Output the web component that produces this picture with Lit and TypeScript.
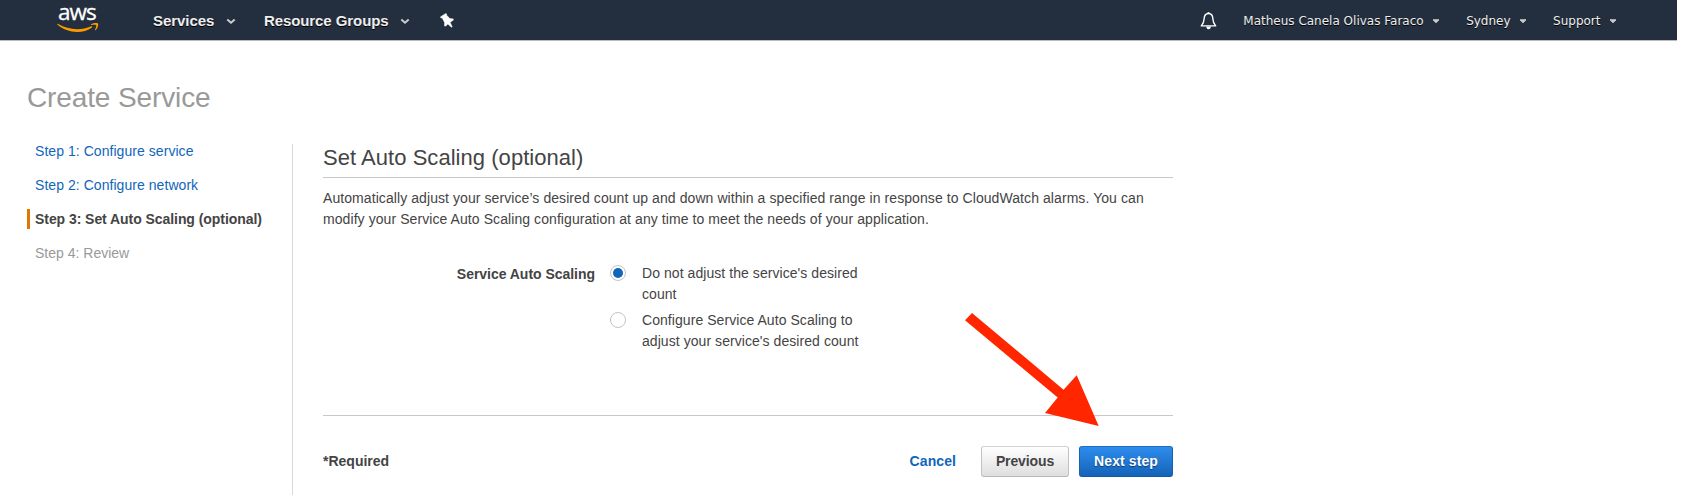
import { LitElement, html, css, svg } from "lit";
import { customElement, property, state } from "lit/decorators.js";
import { classMap } from "lit/directives/class-map.js";

@customElement("console-header")
class ConsoleHeader extends LitElement {
  static styles = css`
    :host {
      display: block;
      width: 1677px;
      height: 40px;
      background: #232f3e;
      border-bottom: 1px solid #bcbcbc;
      color: #eee;
    }
    .bar { display: flex; align-items: flex-start; height: 40px; }
    .logo {
      display: flex;
      flex-direction: column;
      width: 42px;
      margin-left: 57px;
    }
    .word {
      height: 23px;
      padding-left: 1px;
      font: 22.5px/24px "Open Sans", sans-serif;
      letter-spacing: -1px;
      color: #fff;
      -webkit-text-stroke: 0.3px #fff;
    }
    .smile { display: block; width: 42px; height: 10px; }
    .menu {
      display: flex;
      font: bold 15px/20px "Liberation Sans", Arial, sans-serif;
      letter-spacing: -0.04px;
      text-shadow: 0 1px 0 #000;
      padding-top: 11px;
    }
    .services { margin-left: 54px; }
    .groups { margin-left: 28px; letter-spacing: -0.08px; }
    .chev { display: block; width: 10px; height: 7px; margin: 7px 0 0 11.5px; }
    .pin { display: block; width: 14px; height: 15px; margin: 13px 0 0 30px; }
    .account {
      display: flex;
      margin-left: auto;
      padding: 11px 60px 0 0;
      font: 12px/20px "DejaVu Sans", Verdana, sans-serif;
      text-shadow: 0 1px 0 #000;
    }
    .item { display: flex; }
    .item + .item { margin-left: 26px; }
    .caret { display: block; width: 8px; height: 5px; margin: 8px 0 0 8.5px; }
    .bell { display: block; width: 17px; height: 18px; margin: 1px 26px 0 0; }
  `;

  private chevron() {
    return svg`<svg class="chev" viewBox="0 0 10 7"><path d="M1.300 1.500 5 4.700 8.700 1.500" fill="none" stroke="#ccc" stroke-width="2"/></svg>`;
  }

  private caret() {
    return svg`<svg class="caret" viewBox="0 0 8 5"><path d="M1 .8H7L4 3.7Z" fill="#ccc" stroke="#ccc" stroke-width="1" stroke-linejoin="round"/></svg>`;
  }

  render() {
    return html`
      <div class="bar">
        <div class="logo">
          <span class="word">aws</span>
          <svg class="smile" viewBox="0 0 42 10">
            <path d="M.3 1.5C.1.9.6.6 1.2 1 7 4.400 13.500 6.200 20 6.200c5 0 9.800-1 14.200-2.900.8-.3 1.400.5.7 1.100C31 7.400 25.300 9 20.300 9 12.800 9 5.800 6.200.3 1.500Z" fill="#f90"/>
            <path d="M34.200 1.200C36.200-.1 40.200-.3 41 .5c.7.900-.3 4.900-2.400 6.700-.4.300-.8.100-.6-.4.6-1.500 1.600-4 1.100-4.700-.5-.6-3.100-.3-4.500-.1-.8.1-.9-.5-.4-.8Z" fill="#f90"/>
          </svg>
        </div>
        <div class="menu services">Services ${this.chevron()}</div>
        <div class="menu groups">Resource Groups ${this.chevron()}</div>
        <svg class="pin" viewBox="0 0 14 15">
          <path d="M5.800.4 6.800 1.200 6.600 2.200 9.900 5.600 13.300 5.900 13.200 7.300 10.100 9.300 12.200 13.800 11.500 14.200 7.800 11 5.800 13.100 4.600 13 4.500 9.300 2.200 5 1 5 .4 3.900Z" fill="#fff" stroke="#fff" stroke-width=".5"/>
        </svg>
        <div class="account">
          <svg class="bell" viewBox="0 0 17 18">
            <path d="M8.500 1.500C5.200 1.500 4.200 4 4.100 7 4 10.500 3.200 11.800 1.300 13.900H15.700C13.800 11.800 13 10.500 12.900 7 12.800 4 11.800 1.500 8.500 1.500Z" fill="none" stroke="#fff" stroke-width="1.400" stroke-linejoin="round"/>
            <path d="M7.500.2h2v1.500h-2ZM6 14.500h5.200Q10.400 17.200 8.600 17.200 6.800 17.200 6 14.500Z" fill="#fff"/>
          </svg>
          <div class="item">Matheus Canela Olivas Faraco ${this.caret()}</div>
          <div class="item">Sydney ${this.caret()}</div>
          <div class="item">Support ${this.caret()}</div>
        </div>
      </div>
    `;
  }
}

@customElement("wizard-steps")
class WizardSteps extends LitElement {
  @property({ type: Number }) current = 3;

  static styles = css`
    :host { display: block; }
    .steps { display: flex; flex-direction: column; gap: 14px; margin: 0; padding: 0; list-style: none; }
    .step {
      border-left: 3px solid transparent;
      padding-left: 5px;
      height: 20px;
      line-height: 20px;
      white-space: nowrap;
      letter-spacing: 0.05px;
      color: #1166bb;
    }
    .active { border-color: #e07700; color: #444; font-weight: bold; letter-spacing: -0.06px; }
    .pending { color: #999; letter-spacing: 0; }
  `;

  private names = ["Configure service", "Configure network", "Set Auto Scaling (optional)", "Review"];

  render() {
    return html`<ol class="steps">
      ${this.names.map((name, i) => html`<li class=${classMap({
        step: true,
        active: i + 1 === this.current,
        pending: i + 1 > this.current,
      })}>Step ${i + 1}: ${name}</li>`)}
    </ol>`;
  }
}

@customElement("app-root")
class AppRoot extends LitElement {
  @state() private choice = 0;

  static styles = css`
    :host {
      display: block;
      position: relative;
      height: 495px;
      overflow: hidden;
      background: #fff;
      color: #444;
      font: 14px/21px "Liberation Sans", Arial, sans-serif;
    }
    .title {
      margin: 40px 0 0 27px;
      font-size: 28px;
      font-weight: normal;
      line-height: 34px;
      letter-spacing: -0.12px;
      color: #999;
    }
    .columns { display: flex; margin-top: 29px; }
    .nav { box-sizing: border-box; width: 292px; padding-left: 27px; margin-top: -3px; }
    .content { width: 850px; height: 351px; padding-left: 30px; border-left: 1px solid #d8d8d8; }
    .heading {
      height: 33px;
      margin: 0;
      border-bottom: 1px solid #c8c8c8;
      font-size: 22px;
      font-weight: normal;
      line-height: 28px;
      letter-spacing: 0.04px;
    }
    .intro { margin: 10px 0 0; letter-spacing: 0.077px; white-space: nowrap; }
    .form { display: flex; height: 152px; margin-top: 33px; }
    .label {
      width: 272px;
      margin: 1px 16px 0 0;
      text-align: right;
      font-weight: bold;
      letter-spacing: -0.03px;
    }
    .options { display: flex; flex-direction: column; gap: 5px; }
    .option { display: flex; letter-spacing: 0.06px; }
    .radio {
      box-sizing: border-box;
      flex: none;
      display: flex;
      align-items: center;
      justify-content: center;
      width: 16px;
      height: 16px;
      margin: 2px 16px 0 -1px;
      border: 1px solid #c4c4c4;
      border-radius: 50%;
      background: #fff;
    }
    .dot { width: 10px; height: 10px; border-radius: 50%; background: #1166bb; }
    .text { width: 222px; }
    .footer {
      display: flex;
      align-items: center;
      padding-top: 30px;
      border-top: 1px solid #c8c8c8;
      font-weight: bold;
    }
    .cancel { margin: 0 25px 0 auto; color: #1166bb; letter-spacing: 0.08px; }
    .button {
      box-sizing: border-box;
      height: 31px;
      padding: 0;
      border: 1px solid #bbb;
      border-radius: 3px;
      font: inherit;
      line-height: 29px;
      text-align: center;
    }
    .previous {
      width: 88px;
      margin-right: 10px;
      border-color: #d2d2d2 #c2c2c2 #b8b8b8;
      background: linear-gradient(#fff, #dedede);
      color: #444;
      letter-spacing: -0.12px;
    }
    .next {
      width: 94px;
      border-color: #1b6ec2 #1762b0 #14599f;
      background: linear-gradient(#2e8cec, #1464b8);
      color: #fff;
      letter-spacing: 0.1px;
      text-shadow: 0 1px 1px #0a3c78;
    }
    .arrow { position: absolute; left: 964px; top: 312px; width: 136px; height: 115px; }
  `;

  private options = [
    ["Do not adjust the service's desired", "count"],
    ["Configure Service Auto Scaling to", "adjust your service's desired count"],
  ];

  render() {
    return html`
      <console-header></console-header>
      <h1 class="title">Create Service</h1>
      <div class="columns">
        <wizard-steps class="nav" .current=${3}></wizard-steps>
        <div class="content">
          <h2 class="heading">Set Auto Scaling (optional)</h2>
          <p class="intro">
            Automatically adjust your service’s desired count up and down within a specified range in response to CloudWatch alarms. You can<br />modify your Service Auto Scaling configuration at any time to meet the needs of your application.
          </p>
          <div class="form">
            <div class="label">Service Auto Scaling</div>
            <div class="options">
              ${this.options.map((lines, i) => html`
                <div class="option" @click=${() => (this.choice = i)}>
                  <span class="radio">${this.choice === i ? html`<span class="dot"></span>` : null}</span>
                  <span class="text">${lines[0]}<br />${lines[1]}</span>
                </div>`)}
            </div>
          </div>
          <div class="footer">
            <span>*Required</span>
            <span class="cancel">Cancel</span>
            <button class="button previous">Previous</button>
            <button class="button next">Next step</button>
          </div>
        </div>
      </div>
      <svg class="arrow" viewBox="964 312 136 115">
        <path d="M972 313 1063.600 389.700 1076.700 375.200 1098.700 426 1045 413 1057.700 397.500 965 320.300Z" fill="#ff2600"/>
      </svg>
    `;
  }
}
